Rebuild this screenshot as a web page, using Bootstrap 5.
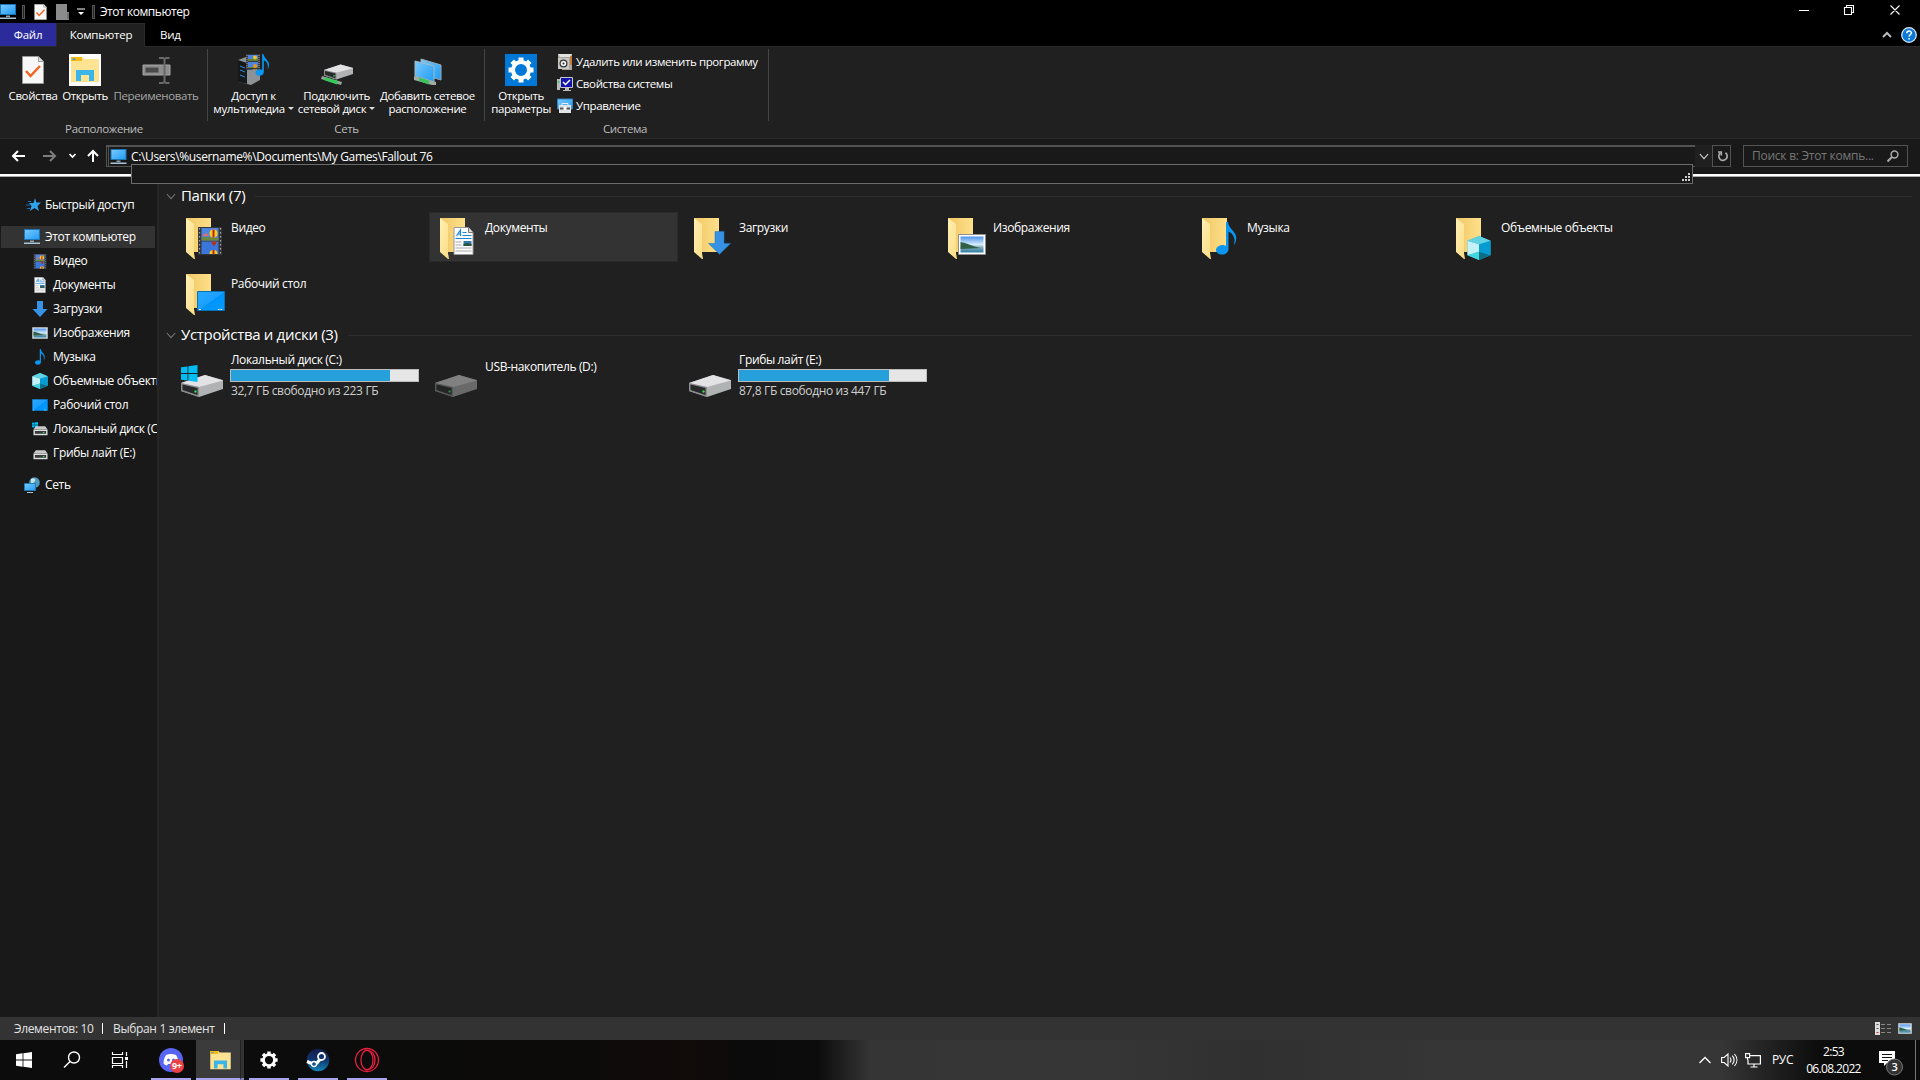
<!DOCTYPE html>
<html lang="ru">
<head>
<meta charset="utf-8">
<title>Этот компьютер</title>
<meta name="viewport" content="width=device-width, initial-scale=1">
<link href="https://cdn.jsdelivr.net/npm/bootstrap@5.3.0/dist/css/bootstrap.min.css" rel="stylesheet">
<style>
body{font-family:"Open Sans","Noto Sans",sans-serif;font-size:12px;line-height:16px;color:#fff;background:#202020;letter-spacing:-.35px;width:1920px;height:1080px;overflow:hidden;white-space:nowrap}
svg{display:block;flex:none}
.titlebar{height:23px;background:#000}
.title-text{margin-left:5px;letter-spacing:-.45px}
.tick{width:3px;height:14px;border:1px solid #555;background:#222}
.tabs{height:24px;background:#000;border-bottom:1px solid #2b2b2b;font-size:11.5px;line-height:14px;letter-spacing:-.25px}
.tab-file{width:56px;background:#2b2b9b;height:23px}
.tab-on{width:89px;background:#202020;height:24px;border:1px solid #2b2b2b;border-bottom:0;padding:0 0 2px 1px}
.ribbon{height:92px;border-bottom:1px solid #2b2b2b;font-size:11.5px;letter-spacing:-.38px}
.rgroup{height:90px;position:relative}
.rgroup::after{content:"";position:absolute;right:0;top:2px;width:1px;height:72px;background:#454545}
.rbtn{padding-top:7px;line-height:13px;text-align:center}
.rbtn svg{margin:0 auto 3px}
.rname{color:#bdbdbd;height:16px}
.caret{display:inline-block;border:3px solid transparent;border-top-color:#ddd;border-bottom:0;vertical-align:3px;margin-left:3px}
.rsmall{height:22px;gap:3px}
.navrow{height:35px;background:#191919}
.addr{width:1589px;height:22px;border:1px solid #535353;border-top-width:2px;border-right:0;background:#191919;position:relative}
.addr-in{border-left:1px solid #535353;height:19px;margin-left:1px;gap:4px;padding-left:1px}
.suggest{position:absolute;left:24px;top:17px;width:1562px;height:20px;background:#191919;border:1px solid #6b6b6b;z-index:5}
.suggest svg{position:absolute;right:2px;bottom:2px}
.adrop{width:17px;height:22px;background:#202020}
.refresh{width:19px;height:22px;border:1px solid #535353;padding-left:2px}
.searchbox{width:165px;height:22px;border:1px solid #535353;color:#777}
.whiteline{height:3px;background:#fff;border-bottom:1px solid #aaa}
.sidebar{width:159px;background:#191919;border-right:2px solid #262626;overflow:hidden;padding-top:17px}
.sitem{height:24px;gap:5px}
.sroot{height:22px;margin:0 2px 0 1px;padding-left:23px}
.schild{padding-left:32px}
.sel{background:#333}
.main{padding:8px 8px 0 7px}
.ghead{height:23px;font-size:15px;letter-spacing:-.32px;gap:5px}
.ghead span{padding-bottom:3px}
.ghead .rule{height:1px;background:#2e2e2e;margin-left:5px}
.tiles{gap:6px 5px;padding:4px 0 0 9px}
.tile{width:249px;height:50px;padding-left:5px;border:1px solid transparent}
.tile .pic{width:50px}
.folders .pic svg{margin-left:1px}
.tile.on{background:#333;border-color:#2a2a2a}
.tname{padding-top:7px}
.cap{width:189px;height:13px;background:#e6e6e6;border:1px solid #bcbcbc;border-radius:0;margin:1px 0 1px -1px}
.cap .progress-bar{background:#26a0da}
.free{color:#cfcfcf}
.status{height:23px;background:#333;color:#e3e3e3}
.vbar{width:1px;height:11px;background:#fff;flex:none}
.taskbar{height:40px;background:linear-gradient(90deg,#0c0c0c 0,#0c0c0c 280px,#0c0b0a 560px,#110b0a 690px,#0b0b0b 740px,#0c0c0c 818px,#353535 870px,#363636 1100px,#303030 1250px,#363636 1450px,#363636 1720px,#0c0c0c 1820px)}
.tb{height:40px;display:flex;align-items:center;justify-content:center}
.run{width:40px;border-bottom:2px solid #aaa5ee;padding-top:2px}
.run.active{width:44px;background:#3b3b3b;padding-left:4px}
.stack2{width:4px;height:40px;background:#333;border-left:1px solid #222;border-bottom:2px solid #8883c0}
</style>
<script src="https://cdn.jsdelivr.net/npm/bootstrap@5.3.0/dist/js/bootstrap.bundle.min.js"></script>
</head>
<body class="d-flex flex-column">
<svg width="0" height="0" class="position-absolute">
<defs>
<linearGradient id="gs" x1="0" y1="0" x2="1" y2="1"><stop offset="0" stop-color="#7cc9fb"/><stop offset="1" stop-color="#1e9cf5"/></linearGradient>
<linearGradient id="gf" x1="0" y1="0" x2="1" y2="0"><stop offset="0" stop-color="#efc765"/><stop offset="1" stop-color="#ffe08a"/></linearGradient>
<linearGradient id="gl" x1="0" y1="0" x2="1" y2="1"><stop offset="0" stop-color="#fff0b5"/><stop offset="1" stop-color="#fcdc82"/></linearGradient>
<linearGradient id="gd" x1="0" y1="0" x2="1" y2="1"><stop offset="0" stop-color="#2aa9ff"/><stop offset=".5" stop-color="#1ba0ff"/><stop offset=".52" stop-color="#0094fb"/><stop offset="1" stop-color="#009dff"/></linearGradient>
<linearGradient id="gp" x1="0" y1="0" x2="0" y2="1"><stop offset="0" stop-color="#4d93ea"/><stop offset=".5" stop-color="#d5ecfa"/><stop offset=".7" stop-color="#7ba6b4"/><stop offset="1" stop-color="#2d7fa6"/></linearGradient>
<linearGradient id="gst" x1="0" y1="0" x2="0" y2="1"><stop offset="0" stop-color="#14204a"/><stop offset=".5" stop-color="#10356f"/><stop offset="1" stop-color="#1387b8"/></linearGradient>
</defs>
<symbol id="pc" viewBox="0 0 16 16"><rect x=".5" y=".5" width="15" height="10" fill="url(#gs)" stroke="#1d75b5"/><path d="M6 11.5h4v1.5H6z" fill="#8fa6b3"/><path d="M0 13.5h16v1.5H0z" fill="#a9c6d8"/></symbol>
<symbol id="check" viewBox="0 0 22 28"><path d="M.5.5h16l5 5v22H.5z" fill="#f7f7f7" stroke="#999"/><path d="M16.500.5v5h5" fill="#ddd" stroke="#999"/><path d="M4 15l4.500 5L18 10" fill="none" stroke="#f2611d" stroke-width="2.400"/></symbol>
<symbol id="folderback" viewBox="0 0 26 42"><path d="M0 0h25v34H6z" fill="url(#gf)"/><path d="M0 0l8 6v29l1 6-1 0L0 34z" fill="url(#gl)"/></symbol>
<symbol id="film" viewBox="0 0 24 28"><path d="M0 0h24v28H0z" fill="#35363a"/><path d="M3.500 1h17v12.500h-17z" fill="#4e86e0"/><path d="M3.500 14.500h17V27h-17z" fill="#3977dd"/><path d="M3.500 11c4-3 6 0 9-1l8 1v2.500h-17z" fill="#6c8a3d"/><path d="M4 9l4-3 3 3z" fill="#ef6a6a"/><circle cx="15.500" cy="6.500" r="4" fill="#f8cf1c"/><path d="M14.500 2.500h2v8h-2z" fill="#c61c1c"/><path d="M13 14.500h6l-2 4h-2z" fill="#b9301c"/><path d="M11.500 27a4 4 0 0 1 8 0z" fill="#f8cf1c"/><path d="M14.500 23h2V27h-2z" fill="#c61c1c"/><path d="M1.500 1v27M22.500 1v27" stroke="#a0a0a0" stroke-width="1.300" stroke-dasharray="1.500 2.500"/></symbol>
<symbol id="doc" viewBox="0 0 20 28"><path d="M.5.5H15l4.500 5v22H.5z" fill="#fbfbfb" stroke="#9a9a9a"/><path d="M15 .5v5h4.500" fill="#ddd" stroke="#777"/><path d="M3 9l4-6v6M4.500 7H7M9 5.500h4M9 8.500h9M2 11.500h16" fill="none" stroke="#1a86d8" stroke-width="1.200"/><path d="M10 14h8v5h-8z" fill="#3679ad"/><path d="M10 17l4-1 4 1v2h-8z" fill="#28543b"/><path d="M2 15h6M2 18h6M2 21h16M2 24h16" stroke="#aaa"/></symbol>
<symbol id="down" viewBox="0 0 23 29" preserveAspectRatio="none"><path d="M7 .5h9V15h6.500L11.500 28 .5 15H7z" fill="#3792e4" stroke="#2177c7" stroke-width=".6"/></symbol>
<symbol id="photo" viewBox="0 0 28 21" preserveAspectRatio="none"><path d="M.5.5h27v20H.5z" fill="#fff" stroke="#8e8e8e"/><path d="M2.500 2.500h23v16h-23z" fill="url(#gp)"/><path d="M2.500 8c7 1 13 5 20 6l-20 1z" fill="#2f6048"/></symbol>
<symbol id="note" viewBox="0 0 21 33"><path d="M10 0h2c1 8 10 10 8 18-.5 3-1 4-2 5 2-8-2-12-5.500-13.500V27c0 3.500-3 5.500-6.500 5.500S0 30.500 0 28s3-5 6.500-5c1.500 0 2.500.3 3.500 1z" fill="#0a97f2"/></symbol>
<symbol id="cube" viewBox="0 0 24 25"><path d="M12 0l12 5v15l-12 5-12-5V5z" fill="#27b6d2"/><path d="M0 5l12 3.500V16.500L0 20z" fill="#c3f1f6"/><path d="M24 5L12 8.500v8L24 20z" fill="#079bd3"/><path d="M0 5l12-5 12 5-12 3.500z" fill="#62d2e3"/><path d="M0 20l12-3.500V25z" fill="#42d7e0"/><path d="M24 20l-12-3.500V25z" fill="#0a6e89"/></symbol>
<symbol id="desk" viewBox="0 0 28 20" preserveAspectRatio="none"><path d="M.5.5h27v19H.5z" fill="url(#gd)" stroke="#0872b8"/><path d="M2 18.500h2M21 18.500h1.500M23.500 18.500H25" stroke="#fff"/></symbol>
<symbol id="drive" viewBox="0 0 42 22"><path d="M0 8L24 0l18 5v9L18 22 0 16z" fill="#b1b2b4"/><path d="M0 8L24 0l18 5.500L18 12z" fill="#e2e2e4"/><path d="M0 8l18 4v10L0 16z" fill="#8b8c8e"/><path d="M1.500 9.500l15 3.500v7L1.500 15z" fill="#262829"/><circle cx="14.500" cy="16.500" r="1.200" fill="#32d94a"/></symbol>
<symbol id="drives" viewBox="0 0 16 10"><path d="M3 0h10l2.500 3.500H.5z" fill="#c9c9ca"/><path d="M.5 3.500h15v6H.5z" fill="#dedede"/><path d="M2 5h12v3H2z" fill="#3a3c3c"/><path d="M10.500 6h1.500v1.500h-1.500z" fill="#35dd4c"/></symbol>
<symbol id="win" viewBox="0 0 16 16"><path d="M0 2.200l6.600-.9v6.300H0zM7.400 1.200L16 0v7.600H7.400zM0 8.400h6.600v6.300L0 13.800zM7.400 8.400H16V16l-8.600-1.200z" fill="currentColor"/></symbol>
<symbol id="gear" viewBox="0 0 32 32"><g fill="none" stroke="#fff"><circle cx="16" cy="16" r="8" stroke-width="4"/><g stroke-width="5"><path d="M16 3.500v4.500M16 24v4.500M3.500 16H8M24 16h4.500M7.200 7.200l3 3M21.800 21.800l3 3M24.800 7.200l-3 3M10.200 21.800l-3 3"/></g></g></symbol>
<symbol id="expl" viewBox="0 0 30 26"><path d="M1 0h11l2 2h15v23H1z" fill="#fee392"/><path d="M1 0h11v4H1z" fill="#f5b916"/><path d="M2.500 1.500h3v1.500h-3z" fill="#3e9ed4"/><path d="M6 13h18v11h-5v-6h-8v6H6z" fill="#3bb5e8"/></symbol>
<symbol id="chev" viewBox="0 0 12 8"><path d="M1 1l5 5.500L11 1" fill="none" stroke="currentColor" stroke-width="1.300"/></symbol>
</svg>

<header>
<div class="titlebar d-flex align-items-center">
<svg width="16" height="16"><use href="#pc"/></svg>
<div class="tick" style="margin-left:6px"></div>
<svg width="13" height="16" style="margin-left:9px"><use href="#check"/></svg>
<svg width="13" height="16" style="margin-left:9px"><path d="M0 0h11v8h2v8H0z" fill="#8b8b8b"/><path d="M11 9h2v6h-2z" fill="#6e6e6e"/></svg>
<svg width="8" height="8" style="margin-left:8px"><path d="M0 1h8" stroke="#fff"/><path d="M1 4h6L4 7z" fill="#fff"/></svg>
<div class="tick" style="margin-left:7px"></div>
<div class="title-text">Этот компьютер</div>
<svg class="ms-auto" width="102" height="12" style="margin-right:19px;margin-bottom:3px" fill="none" stroke="#fff"><path d="M0 6.500h10M45.500 3.500h7v7h-7zM47.500 3.500v-2h7v7h-2M91.500 1.500l9 9M100.500 1.500l-9 9" stroke-width="1.100"/></svg>
</div>
<div class="tabs d-flex">
<div class="tab-file d-flex align-items-center justify-content-center">Файл</div>
<div class="tab-on d-flex align-items-center justify-content-center">Компьютер</div>
<div class="d-flex align-items-center" style="padding-left:15px">Вид</div>
<div class="ms-auto d-flex align-items-center" style="gap:9px;padding-right:3px">
<svg width="10" height="7"><path d="M1 6l4-4 4 4" fill="none" stroke="#bbb" stroke-width="2"/></svg>
<svg width="16" height="16"><circle cx="8" cy="8" r="7.300" fill="#0a79d8" stroke="#dceaf5" stroke-width="1.200"/><path d="M5.800 6.300c0-3 4.600-3 4.600-.3 0 1.600-2.300 1.600-2.300 3.600M8.100 11v1.500" fill="none" stroke="#fff" stroke-width="1.500"/></svg>
</div>
</div>
<div class="ribbon d-flex">
<section class="rgroup d-flex flex-column" style="width:208px">
<div class="d-flex flex-grow-1" style="padding-left:6px">
<div class="rbtn" style="width:54px"><svg width="32" height="32"><use href="#check" x="5" y="2" width="22" height="28"/></svg>Свойства</div>
<div class="rbtn" style="width:50px"><svg width="32" height="32"><path d="M0 0h32v32H0z" fill="#fff"/><use href="#expl" x="1" y="3" width="30" height="26"/></svg>Открыть</div>
<div class="rbtn" style="width:92px;color:#a6a6a6"><svg width="32" height="32"><path d="M3 11h27v10H3z" fill="#8d8d8d" stroke="#a5a5a5"/><path d="M5.500 13.500h13v5h-13z" fill="#4a4a4a"/><path d="M19 4h4l1.500 1L26 4h3.500M24.500 5v23M19 29h4l1.500-1L26 29h3.500" stroke="#686868" stroke-width="2" fill="none"/></svg>Переименовать</div>
</div><div class="rname text-center">Расположение</div>
</section>
<section class="rgroup d-flex flex-column" style="width:277px">
<div class="d-flex flex-grow-1" style="padding-left:3px">
<div class="rbtn" style="width:85px"><svg width="32" height="32"><path d="M0 6l8-3 14 4v19l-9 5L0 28z" fill="#8d9296"/><path d="M0 6l9 3v21L0 28z" fill="#15191c"/><path d="M2 12l5 2M2 16l5 2M2 21l5 2" stroke="#2d8fe0"/><use href="#film" x="7" y="0" width="16" height="16"/><path d="M8 0h14v15H8z" fill="#35363a"/><path d="M10 1h10v6H10zM10 8h10v6H10z" fill="#4b83df"/><path d="M10 5h10v2H10zM10 13h10v1H10z" fill="#5f8038"/><circle cx="17" cy="3.500" r="2" fill="#f3c41c"/><circle cx="17" cy="12" r="2" fill="#e8981c"/><path d="M9 1v14M21 1v14" stroke="#aaa" stroke-dasharray="1 1"/><use href="#note" x="17" y="0" width="15" height="22"/></svg>Доступ к<br>мультимедиа<span class="caret"></span></div>
<div class="rbtn" style="width:81px"><svg width="32" height="32"><path d="M1 22l20 6-1 3L0 25z" fill="#9aa19b"/><path d="M4 23l13 4-1 3.500L3 26z" fill="#36c95a"/><use href="#drive" x="3" y="10" width="29" height="16"/></svg>Подключить<br>сетевой диск<span class="caret"></span></div>
<div class="rbtn" style="width:101px"><svg width="32" height="32"><path d="M9 5l20 6v15L9 20z" fill="url(#gs)" stroke="#9aabb3"/><path d="M3 7l19 5v16L3 22z" fill="url(#gs)" stroke="#a9b8bf"/><path d="M2 22l22 6v3l-4 0L2 26z" fill="#a3a9a4"/><path d="M7 23.500l10 3v4L7 27z" fill="#3cc45c"/></svg>Добавить сетевое<br>расположение</div>
</div><div class="rname text-center">Сеть</div>
</section>
<section class="rgroup d-flex flex-column" style="width:284px">
<div class="d-flex flex-grow-1" style="padding-left:4px">
<div class="rbtn" style="width:64px"><svg width="32" height="32"><path d="M0 0h32v32H0z" fill="#0078d7"/><use href="#gear" width="32" height="32"/></svg>Открыть<br>параметры</div>
<div style="padding:4px 0 0 4px">
<div class="rsmall d-flex align-items-center"><svg width="16" height="16"><path d="M1 0h14v16H5V5H1z" fill="#a9a79b"/><path d="M1 0h14l-2 3H3z" fill="#e3e3e0"/><path d="M13 2h2v9h-2z" fill="#cf7a36"/><path d="M1 4h11v11H1z" fill="#c9c9c6"/><circle cx="6.500" cy="9.500" r="4" fill="#333"/><circle cx="6.500" cy="9.500" r="2.800" fill="#eee"/><circle cx="6.500" cy="9.500" r="1" fill="#333"/></svg>Удалить или изменить программу</div>
<div class="rsmall d-flex align-items-center"><svg width="16" height="16"><path d="M0 3h3v11H0z" fill="#b9bcbc"/><path d="M.8 5h1.500v2H.8z" fill="#38cc48"/><path d="M3.500 1.500h12v10h-12z" fill="#1415a8" stroke="#c6c7d0"/><path d="M6 6l2.500 2.500L13 4" stroke="#fff" stroke-width="1.500" fill="none"/><path d="M8 12h4v2h2v1H6v-1h2z" fill="#bbb"/></svg>Свойства системы</div>
<div class="rsmall d-flex align-items-center"><svg width="16" height="16"><path d="M.5 1h15v10H.5z" fill="url(#gs)" stroke="#3284bd"/><path d="M2 7h12v8H2z" fill="#e1e3e4"/><path d="M5 7V5.500h6V7" stroke="#eee" fill="none"/><path d="M3 9.500h10v2H3z" fill="#505759"/><path d="M6.500 9h3v3h-3z" fill="#fff"/></svg>Управление</div>
</div>
</div><div class="rname text-center" style="padding-right:4px">Система</div>
</section>
</div>
<div class="navrow d-flex" style="padding-top:6px">
<svg width="106" height="22" fill="none" stroke="#fff" stroke-width="2"><path d="M25 11H13M18 6l-5 5 5 5"/><path d="M43 11h12M50 6l5 5-5 5" stroke="#7d7d7d"/><path d="M69.500 9l3 3 3-3" stroke-width="1.700"/><path d="M93 17V6M88 11l5-5 5 5"/></svg>
<div class="addr"><div class="addr-in d-flex align-items-center"><svg width="17" height="16"><use href="#pc"/></svg><span>C:\Users\%username%\Documents\My Games\Fallout 76</span></div>
<div class="suggest"><svg width="8" height="8" fill="#ccc"><path d="M6 0h2v2H6zM3 3h2v2H3zM6 3h2v2H6zM0 6h2v2H0zM3 6h2v2H3zM6 6h2v2H6z"/></svg></div></div>
<div class="adrop d-flex align-items-center justify-content-center" style="color:#ddd"><svg width="10" height="7"><use href="#chev"/></svg></div>
<div class="refresh d-flex align-items-center justify-content-center"><svg width="12" height="12" fill="none" stroke="#aaa" stroke-width="1.700"><path d="M8.500 2.800A4.200 4.200 0 1 1 3 3.200M1 2h3.300v3.500"/></svg></div>
<div class="searchbox d-flex align-items-center justify-content-between" style="margin-left:12px;padding:0 8px"><span style="letter-spacing:-.25px">Поиск в: Этот компь...</span><svg width="12" height="12" fill="none" stroke="#aaa"><circle cx="7.500" cy="4.500" r="3.400" stroke-width="1.500"/><path d="M5 7l-4.500 4.500" stroke-width="2"/></svg></div>
</div>
<div class="whiteline"></div>
</header>

<div class="d-flex flex-grow-1" style="min-height:0">
<nav class="sidebar flex-shrink-0">
<div class="sitem sroot d-flex align-items-center" style="padding-left:25px;gap:4px"><svg width="15" height="14"><path d="M9 0l1.300 4.500H15L11.500 8l1.500 5-4.500-3L4 13l1.500-5L3 5h4.500z" fill="#2ea4ef"/><path d="M2 3.500h3M0 7h4M1 10.500h3" stroke="#1773b5"/></svg>Быстрый доступ</div>
<div class="sitem sroot sel d-flex align-items-center" style="margin-top:10px;margin-bottom:1px"><svg width="16" height="16"><use href="#pc"/></svg>Этот компьютер</div>
<div class="sitem schild d-flex align-items-center"><svg width="16" height="15"><use href="#film" x="1" width="14" height="15"/></svg>Видео</div>
<div class="sitem schild d-flex align-items-center"><svg width="16" height="16"><use href="#doc"/></svg>Документы</div>
<div class="sitem schild d-flex align-items-center"><svg width="16" height="16"><path d="M5 0h6v8h4.500L8 16 .5 8H5z" fill="#3792e4"/></svg>Загрузки</div>
<div class="sitem schild d-flex align-items-center"><svg width="16" height="12"><use href="#photo"/></svg>Изображения</div>
<div class="sitem schild d-flex align-items-center"><svg width="16" height="16"><use href="#note"/></svg>Музыка</div>
<div class="sitem schild d-flex align-items-center"><svg width="16" height="16"><use href="#cube"/></svg>Объемные объекты</div>
<div class="sitem schild d-flex align-items-center"><svg width="16" height="12"><use href="#desk"/></svg>Рабочий стол</div>
<div class="sitem schild d-flex align-items-center"><svg width="16" height="14" style="color:#00bcf2"><use href="#win" width="6" height="6"/><use href="#drives" x="1" y="4" width="15" height="10"/></svg>Локальный диск (C:)</div>
<div class="sitem schild d-flex align-items-center"><svg width="16" height="14"><use href="#drives" x="1" y="4" width="15" height="10"/></svg>Грибы лайт (E:)</div>
<div class="sitem sroot d-flex align-items-center" style="margin-top:9px"><svg width="16" height="16"><circle cx="10.500" cy="5.500" r="5.300" fill="#4f9dbd"/><path d="M7 2c3-2 5 0 4 2s-3 2-4 4z" fill="#c4e3ea"/><path d="M.5 6.500h11v7H.5z" fill="url(#gs)" stroke="#2278b3"/><path d="M3 15.500h6" stroke="#a9c6d8"/></svg>Сеть</div>
</nav>
<main class="main flex-grow-1">
<div class="ghead d-flex align-items-center"><svg width="10" height="7" style="color:#777"><use href="#chev"/></svg><span>Папки (7)</span><div class="rule flex-grow-1"></div></div>
<div class="tiles folders d-flex flex-wrap">
<div class="tile d-flex"><div class="pic"><svg width="44" height="48"><use href="#folderback" x="4" y="5" width="26" height="42"/><use href="#film" x="16" y="14" width="24" height="28"/></svg></div><div class="tname">Видео</div></div>
<div class="tile on d-flex"><div class="pic"><svg width="44" height="48"><use href="#folderback" x="4" y="5" width="26" height="42"/><use href="#doc" x="17" y="14" width="21" height="28"/></svg></div><div class="tname">Документы</div></div>
<div class="tile d-flex"><div class="pic"><svg width="44" height="48"><use href="#folderback" x="4" y="5" width="26" height="42"/><use href="#down" x="18" y="18" width="23" height="24"/></svg></div><div class="tname">Загрузки</div></div>
<div class="tile d-flex"><div class="pic"><svg width="44" height="48"><use href="#folderback" x="4" y="5" width="26" height="42"/><use href="#photo" x="14" y="21" width="28" height="21"/></svg></div><div class="tname">Изображения</div></div>
<div class="tile d-flex"><div class="pic"><svg width="44" height="48"><use href="#folderback" x="4" y="5" width="26" height="42"/><use href="#note" x="18" y="9" width="21" height="33"/></svg></div><div class="tname">Музыка</div></div>
<div class="tile d-flex"><div class="pic"><svg width="44" height="48"><use href="#folderback" x="4" y="5" width="26" height="42"/><use href="#cube" x="15" y="23" width="24" height="24"/></svg></div><div class="tname">Объемные объекты</div></div>
<div class="tile d-flex"><div class="pic"><svg width="44" height="48"><use href="#folderback" x="4" y="5" width="26" height="42"/><use href="#desk" x="15" y="22" width="28" height="20"/></svg></div><div class="tname">Рабочий стол</div></div>
</div>
<div class="ghead d-flex align-items-center" style="margin-top:6px"><svg width="10" height="7" style="color:#777"><use href="#chev"/></svg><span>Устройства и диски (3)</span><div class="rule flex-grow-1"></div></div>
<div class="tiles d-flex">
<div class="tile d-flex"><div class="pic"><svg width="44" height="48" style="color:#00bcf2"><use href="#drive" y="23" width="42" height="22"/><use href="#win" x="-1" y="13" width="18" height="17"/></svg></div><div><div>Локальный диск (C:)</div><div class="progress cap"><div class="progress-bar" style="width:85.2%"></div></div><div class="free">32,7 ГБ свободно из 223 ГБ</div></div></div>
<div class="tile d-flex"><div class="pic"><svg width="44" height="48" opacity=".5"><use href="#drive" y="23" width="42" height="22"/></svg></div><div class="tname">USB-накопитель (D:)</div></div>
<div class="tile d-flex"><div class="pic"><svg width="44" height="48"><use href="#drive" y="23" width="42" height="22"/></svg></div><div><div>Грибы лайт (E:)</div><div class="progress cap"><div class="progress-bar" style="width:80.2%"></div></div><div class="free">87,8 ГБ свободно из 447 ГБ</div></div></div>
</div>
</main>
</div>

<footer>
<div class="status d-flex align-items-center">
<span style="width:88px;margin-left:14px">Элементов: 10</span><div class="vbar"></div><span style="width:121px;padding-left:10px">Выбран 1 элемент</span><div class="vbar"></div>
<div class="ms-auto d-flex align-items-center" style="gap:7px;padding-right:8px">
<svg width="16" height="13"><path d="M0 0h5v13H0z" fill="#ddd"/><path d="M1.500 2h2v1h-2zM1.500 6h2v1h-2z" fill="#555"/><path d="M1.500 10h2v1h-2z" fill="#c33"/><path d="M6 2.500h4M12 2.500h4M6 6.500h4M12 6.500h4M6 10.500h4M12 10.500h4" stroke="#888"/></svg>
<svg width="14" height="11"><use href="#photo"/></svg>
</div>
</div>
<div class="taskbar d-flex">
<div class="tb" style="width:48px"><svg width="16" height="16"><use href="#win"/></svg></div>
<div class="tb" style="width:48px"><svg width="18" height="18" fill="none" stroke="#fff" stroke-width="1.400"><circle cx="11" cy="6.500" r="5.500"/><path d="M7 10.500L1 16.500"/></svg></div>
<div class="tb" style="width:48px"><svg width="18" height="17" fill="none" stroke="#fff"><path d="M1.500 0v2.500h10V0M1.500 5.500h10v6h-10zM1.500 16v-2.500h10V16M15.500 0v4M15.500 9v7" stroke-width="1.200"/><path d="M14 5h3v3h-3z" fill="#fff" stroke="none"/></svg></div>
<div class="tb run" style="margin-left:7px"><svg width="26" height="26"><circle cx="13" cy="13" r="12" fill="#5865f2"/><path d="M8 8c3-1.200 7-1.200 10 0 2 3 2.600 6 2.300 9-2 1.500-3.300 1.500-3.300 1.500l-1-1.500h-6l-1 1.500s-1.300 0-3.300-1.500C5.400 14 6 11 8 8z" fill="#fff"/><circle cx="10.500" cy="13" r="1.500" fill="#5865f2"/><circle cx="15.500" cy="13" r="1.500" fill="#5865f2"/><circle cx="19" cy="19" r="7" fill="#ed4245"/><text x="18.800" y="22.200" font-size="9" font-weight="700" fill="#fff" text-anchor="middle">9+</text></svg></div>
<div class="tb run active" style="margin-left:5px"><svg width="23" height="19"><use href="#expl" width="23" height="19"/></svg></div><div class="stack2"></div>
<div class="tb run" style="margin-left:5px"><svg width="22" height="22"><use href="#gear"/></svg></div>
<div class="tb run" style="margin-left:9px"><svg width="24" height="24"><circle cx="12" cy="12" r="11.200" fill="url(#gst)"/><path d="M1 13.500l6 2.500 4-1 4-5" stroke="#fff" stroke-width="3.200" fill="none"/><circle cx="15.500" cy="8.500" r="3.500" fill="#10356f" stroke="#fff" stroke-width="1.800"/><circle cx="8" cy="16" r="2.500" fill="#10508a" stroke="#fff" stroke-width="1.300"/></svg></div>
<div class="tb run" style="margin-left:9px"><svg width="26" height="26" fill="none" stroke="#e8203f" stroke-width="1.300"><circle cx="13" cy="13" r="11.500"/><ellipse cx="13" cy="13" rx="6" ry="9.800"/><path d="M11 3.500c7-1 10 4 10 9.500s-3 10.500-10 9.500"/></svg></div>
<div class="ms-auto d-flex align-items-center" style="height:40px">
<svg width="12" height="8" style="margin-right:10px"><path d="M.5 7L6 1.500 11.500 7" fill="none" stroke="#fff" stroke-width="1.300"/></svg>
<svg width="17" height="16" fill="none" stroke="#fff" stroke-width="1.100" style="margin-right:7px"><path d="M.6 5.500h2.500L7 2v12l-3.900-3.500H.6zM9 5.500c1.200 1.500 1.200 3.500 0 5M11.300 3.700c2.200 2.600 2.200 6 0 8.600M13.500 2c3.200 3.600 3.200 8.400 0 12"/></svg>
<svg width="16" height="15" fill="none" stroke="#fff" stroke-width="1.200" style="margin-right:11px"><path d="M5 2.600h10.400v8.400H3V7M9 11v3M5.500 14h7"/><path d="M.6.6h4v4h-4zM2.600 5v2"/></svg>
<span style="width:27px">РУС</span>
<div class="text-center" style="width:69px;line-height:17px;letter-spacing:-.65px">2:53<br>06.08.2022</div>
<svg width="27" height="27" style="margin:6px 0 0 11px"><path d="M0 1h16v12H8l-3 3v-3H0z" fill="#fff"/><path d="M3 4.500h10M3 7.500h10M3 10.500h6" stroke="#111"/><circle cx="15.500" cy="17" r="8" fill="#333" stroke="#777"/><text x="15.500" y="21" font-size="11" font-weight="600" text-anchor="middle" fill="#fff">3</text></svg>
<div style="width:1px;height:40px;background:#777;margin:0 4px 0 9px"></div>
</div>
</div>
</footer>
</body>
</html>
